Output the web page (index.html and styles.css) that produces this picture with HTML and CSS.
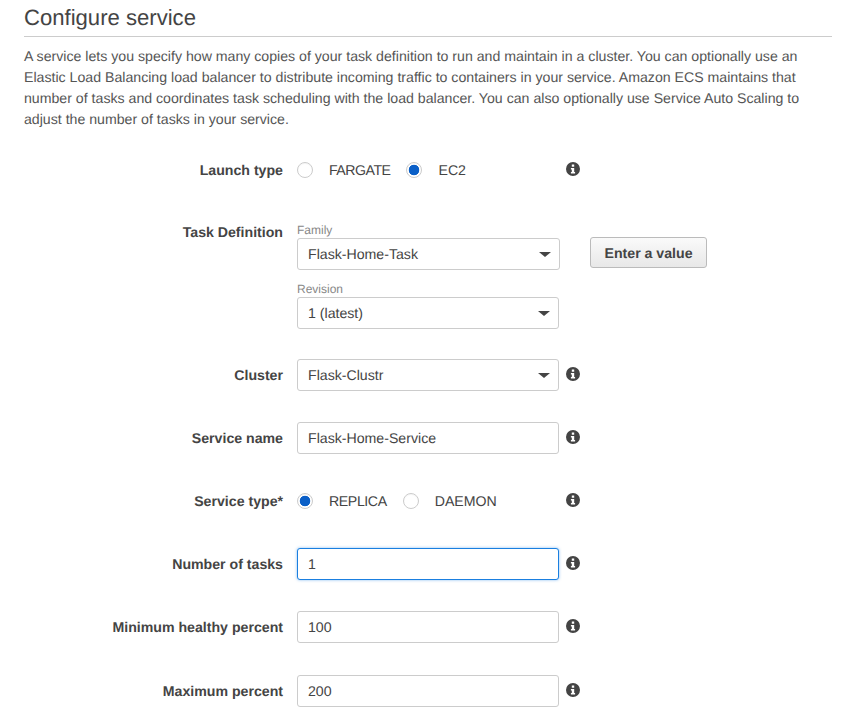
FILE: index.html
```html
<!DOCTYPE html>
<html lang="en">
<head>
    <meta charset="utf-8" />
    <title>Configure service</title>
    <link rel="stylesheet" href="styles.css">
</head>
<body>
<svg class="sprite" width="0" height="0">
  <symbol id="info" viewBox="0 0 14 14">
    <path fill-rule="evenodd" d="M7 0a7 7 0 1 1 0 14A7 7 0 0 1 7 0zM5.8 2.5v2.2h2.4V2.5zM4.9 6v1.4h.9v2.6h-.9v1.4h4.2V10h-.9V6z"/>
  </symbol>
</svg>

<h1>Configure service</h1>

<p class="intro">
  A service lets you specify how many copies of your task definition to run and maintain in a cluster. You can optionally use an Elastic Load Balancing load balancer to distribute incoming traffic to containers in your service. Amazon ECS maintains that number of tasks and coordinates task scheduling with the load balancer. You can also optionally use Service Auto Scaling to adjust the number of tasks in your service.
</p>

<form class="form">
  <div class="row row-launch">
    <label class="row-label">Launch type</label>
    <div class="radios">
      <span class="radio"></span><span class="radio-text fargate">FARGATE</span>
      <span class="radio on"></span><span class="radio-text">EC2</span>
    </div>
    <svg class="info"><use href="#info"/></svg>
  </div>

  <div class="row row-task">
    <label class="row-label">Task Definition</label>
    <div class="stack">
      <div class="hint">Family</div>
      <div class="field select wide">Flask-Home-Task<span class="caret"></span></div>
      <div class="hint hint-second">Revision</div>
      <div class="field select">1 (latest)<span class="caret"></span></div>
    </div>
    <button type="button" class="btn">Enter a value</button>
  </div>

  <div class="row">
    <label class="row-label">Cluster</label>
    <div class="field select">Flask-Clustr<span class="caret"></span></div>
    <svg class="info"><use href="#info"/></svg>
  </div>

  <div class="row">
    <label class="row-label">Service name</label>
    <div class="field">Flask-Home-Service</div>
    <svg class="info"><use href="#info"/></svg>
  </div>

  <div class="row">
    <label class="row-label">Service type*</label>
    <div class="radios">
      <span class="radio on"></span><span class="radio-text replica">REPLICA</span>
      <span class="radio"></span><span class="radio-text">DAEMON</span>
    </div>
    <svg class="info"><use href="#info"/></svg>
  </div>

  <div class="row">
    <label class="row-label">Number of tasks</label>
    <div class="field focus">1</div>
    <svg class="info"><use href="#info"/></svg>
  </div>

  <div class="row row-min">
    <label class="row-label">Minimum healthy percent</label>
    <div class="field">100</div>
    <svg class="info"><use href="#info"/></svg>
  </div>

  <div class="row">
    <label class="row-label">Maximum percent</label>
    <div class="field">200</div>
    <svg class="info"><use href="#info"/></svg>
  </div>
</form>
</body>
</html>
```

FILE: styles.css
```css
html, body {
    background-color: #fff;
    color: #444;
}

body {
    margin: 0;
    padding: 0 9px 0 24px;
    font-family: "Liberation Sans", Arial, sans-serif;
    font-size: 14.15px;
    line-height: 21px;
    text-rendering: geometricPrecision;
    overflow: hidden;
}

.sprite {
    position: absolute;
}

h1 {
    margin: 0;
    padding: 5px 0 5px;
    height: 26px;
    font-size: 22.1px;
    font-weight: normal;
    line-height: 26px;
    border-bottom: 1px solid #ccc;
}

.intro {
    margin: 9px 0 0;
    color: #555;
}

.form {
    margin-top: 24px;
}

.row {
    display: grid;
    grid-template-columns: 259px 262px 21px;
    column-gap: 14px;
    align-items: center;
    min-height: 32px;
    margin-bottom: 31px;
}

.row > .info {
    margin-left: -7px;
    margin-bottom: 2px;
}

.row-launch {
    margin-bottom: 36px;
}

.row-task {
    align-items: start;
    margin-bottom: 30px;
}

.row-min {
    margin-bottom: 32px;
}

.row-label {
    text-align: right;
    font-weight: bold;
}

.info {
    width: 14px;
    height: 14px;
    fill: #444;
}

.radios {
    display: flex;
    align-items: center;
}

.radio {
    box-sizing: border-box;
    width: 16px;
    height: 16px;
    flex: none;
    border: 1px solid #ccc;
    border-radius: 50%;
    background: #fff;
    box-shadow: inset 0 1px 1px rgba(0, 0, 0, 0.04);
}

.radio.on {
    background: radial-gradient(circle, #0a5fc7 0, #0a5fc7 5px, #fff 5.6px);
}

.radio-text {
    margin-left: 16px;
    margin-right: 16px;
}

.fargate {
    letter-spacing: -0.5px;
}

.replica {
    letter-spacing: -0.4px;
}

.stack {
    display: flex;
    flex-direction: column;
    width: 262px;
}

.hint {
    font-size: 12px;
    line-height: 16px;
    color: #888;
}

.hint-second {
    margin-top: 11px;
}

.field {
    box-sizing: border-box;
    position: relative;
    width: 262px;
    height: 32px;
    padding: 0 10px;
    line-height: 30px;
    background: #fff;
    border: 1px solid #ccc;
    border-radius: 3px;
}

.wide {
    width: 263px;
}

.focus {
    border-color: #1a7fe0;
    box-shadow: 0 0 3px rgba(30, 130, 230, 0.55);
}

.caret {
    position: absolute;
    top: 13px;
    right: 8px;
    width: 0;
    height: 0;
    border-top: 5px solid #444;
    border-left: 6px solid transparent;
    border-right: 6px solid transparent;
}

.btn {
    box-sizing: border-box;
    margin-left: 17px;
    margin-top: 15px;
    width: 117px;
    height: 31px;
    padding: 0;
    font: bold 14.15px "Liberation Sans", Arial, sans-serif;
    text-rendering: geometricPrecision;
    color: #444;
    background: linear-gradient(#fafafa, #e8e8e8);
    border: 1px solid #bbb;
    border-radius: 3px;
}
```
